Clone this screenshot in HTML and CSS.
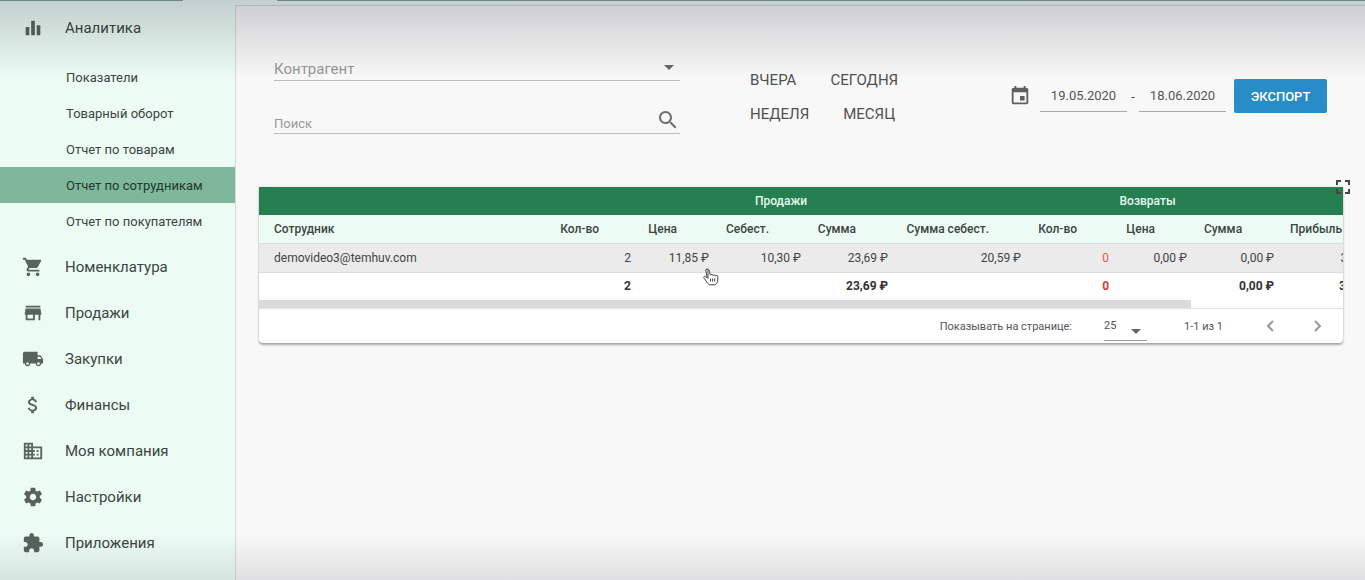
FILE: index.html
```
<!DOCTYPE html>
<html lang="ru">
<head>
<meta charset="utf-8">
<title>Отчет по сотрудникам</title>
<link rel="stylesheet" href="styles.css">
</head>
<body>
<div class="app">
  <div class="topbar"><span class="topbar-left"></span><span class="topbar-right"></span></div>
  <div class="layout">
    <nav class="sidebar">
      <a class="item" href="#"><svg class="icon" viewBox="0 0 24 24"><path d="M4 11h4v9H4zM10 4h4v16h-4zM16 9h4v11h-4z"/></svg>Аналитика</a>
      <div class="sub">
        <a class="subitem" href="#">Показатели</a>
        <a class="subitem" href="#">Товарный оборот</a>
        <a class="subitem" href="#">Отчет по товарам</a>
        <a class="subitem active" href="#">Отчет по сотрудникам</a>
        <a class="subitem" href="#">Отчет по покупателям</a>
      </div>
      <a class="item" href="#"><svg class="icon" viewBox="0 0 24 24"><path d="M7 18c-1.1 0-1.99.9-1.99 2S5.900 22 7 22s2-.9 2-2-.9-2-2-2zM1 2v2h2l3.600 7.590-1.350 2.450c-.16.28-.25.61-.25.96 0 1.100.9 2 2 2h12v-2H7.420c-.14 0-.25-.11-.25-.25l.03-.12.9-1.630h7.450c.75 0 1.410-.41 1.750-1.030l3.580-6.490c.08-.14.12-.31.12-.48 0-.55-.45-1-1-1H5.210l-.94-2H1zm16 16c-1.100 0-1.990.9-1.990 2s.89 2 1.990 2 2-.9 2-2-.9-2-2-2z"/></svg>Номенклатура</a>
      <a class="item" href="#"><svg class="icon" viewBox="0 0 24 24"><path d="M20 4H4v2h16V4zm1 10v-2l-1-5H4l-1 5v2h1v6h10v-6h4v6h2v-6h1zm-9 4H6v-4h6v4z"/></svg>Продажи</a>
      <a class="item" href="#"><svg class="icon" viewBox="0 0 24 24"><path d="M20 8h-3V4H3c-1.100 0-2 .9-2 2v11h2c0 1.660 1.340 3 3 3s3-1.340 3-3h6c0 1.660 1.340 3 3 3s3-1.340 3-3h2v-5l-3-4zM6 18.500c-.83 0-1.500-.67-1.500-1.500s.67-1.500 1.500-1.500 1.500.67 1.500 1.500-.67 1.500-1.500 1.500zm13.500-9l1.960 2.500H17V9.500h2.500zm-1.500 9c-.83 0-1.500-.67-1.500-1.500s.67-1.500 1.500-1.500 1.500.67 1.500 1.500-.67 1.500-1.500 1.500z"/></svg>Закупки</a>
      <a class="item" href="#"><svg class="icon" viewBox="0 0 24 24"><path d="M11.800 10.900c-2.270-.59-3-1.200-3-2.150 0-1.090 1.010-1.850 2.700-1.850 1.780 0 2.440.85 2.500 2.100h2.210c-.07-1.720-1.120-3.300-3.210-3.810V3h-3v2.160c-1.940.42-3.500 1.680-3.500 3.610 0 2.310 1.910 3.460 4.700 4.130 2.500.6 3 1.480 3 2.410 0 .69-.49 1.790-2.700 1.790-2.060 0-2.870-.92-2.980-2.100h-2.200c.12 2.190 1.760 3.420 3.680 3.830V21h3v-2.150c1.950-.37 3.500-1.500 3.500-3.550 0-2.840-2.430-3.810-4.700-4.400z"/></svg>Финансы</a>
      <a class="item" href="#"><svg class="icon" viewBox="0 0 24 24"><path d="M12 7V3H2v18h20V7H12zM6 19H4v-2h2v2zm0-4H4v-2h2v2zm0-4H4V9h2v2zm0-4H4V5h2v2zm4 12H8v-2h2v2zm0-4H8v-2h2v2zm0-4H8V9h2v2zm0-4H8V5h2v2zm10 12h-8v-2h2v-2h-2v-2h2v-2h-2V9h8v10zm-2-8h-2v2h2v-2zm0 4h-2v2h2v-2z"/></svg>Моя компания</a>
      <a class="item" href="#"><svg class="icon" viewBox="0 0 24 24"><path d="M19.430 12.980c.04-.32.07-.64.07-.98s-.03-.66-.07-.98l2.110-1.650c.19-.15.24-.42.12-.64l-2-3.460c-.12-.22-.39-.3-.61-.22l-2.490 1c-.52-.4-1.080-.73-1.690-.98l-.38-2.650C14.460 2.180 14.250 2 14 2h-4c-.25 0-.46.18-.49.42l-.38 2.650c-.61.25-1.170.59-1.690.98l-2.490-1c-.23-.09-.49 0-.61.22l-2 3.460c-.13.22-.07.49.12.64l2.110 1.650c-.04.32-.07.65-.07.98s.03.66.07.98l-2.110 1.650c-.19.15-.24.42-.12.64l2 3.460c.12.22.39.3.61.22l2.490-1c.52.4 1.080.73 1.690.98l.38 2.650c.03.24.24.42.49.42h4c.25 0 .46-.18.49-.42l.38-2.650c.61-.25 1.170-.59 1.690-.98l2.490 1c.23.09.49 0 .61-.22l2-3.460c.12-.22.07-.49-.12-.64l-2.110-1.650zM12 15.500c-1.930 0-3.500-1.570-3.500-3.500s1.570-3.500 3.500-3.500 3.500 1.570 3.500 3.500-1.570 3.500-3.500 3.500z"/></svg>Настройки</a>
      <a class="item" href="#"><svg class="icon" viewBox="0 0 24 24"><path d="M20.500 11H19V7c0-1.100-.9-2-2-2h-4V3.500C13 2.120 11.880 1 10.500 1S8 2.120 8 3.500V5H4c-1.100 0-1.990.9-1.990 2v3.800H3.500c1.490 0 2.700 1.210 2.700 2.700s-1.210 2.700-2.700 2.700H2V20c0 1.100.9 2 2 2h3.800v-1.500c0-1.490 1.210-2.700 2.700-2.700 1.490 0 2.700 1.210 2.700 2.700V22H17c1.100 0 2-.9 2-2v-4h1.500c1.380 0 2.500-1.120 2.500-2.500S21.880 11 20.500 11z"/></svg>Приложения</a>
    </nav>
    <main class="main">
      <form class="filters">
        <div class="fields">
          <div class="field">
            <select class="control" aria-label="Контрагент"><option>Контрагент</option></select>
            <svg class="caret" viewBox="0 0 10 5"><path d="M0 0h10L5 5z"/></svg>
          </div>
          <div class="field">
            <input class="control search" type="text" placeholder="Поиск" aria-label="Поиск">
            <svg class="lens" viewBox="0 0 24 24"><path d="M15.500 14h-.79l-.28-.27C15.410 12.590 16 11.110 16 9.500 16 5.910 13.090 3 9.500 3S3 5.910 3 9.500 5.910 16 9.500 16c1.610 0 3.090-.59 4.230-1.570l.27.28v.79l5 4.990L20.490 19l-4.990-5zm-6 0C7.010 14 5 11.990 5 9.500S7.010 5 9.500 5 14 7.010 14 9.500 11.990 14 9.500 14z"/></svg>
          </div>
        </div>
        <div class="ranges">
          <div class="range-row"><button type="button" class="range">Вчера</button><button type="button" class="range">Сегодня</button></div>
          <div class="range-row"><button type="button" class="range">Неделя</button><button type="button" class="range">Месяц</button></div>
        </div>
        <div class="dates">
          <svg class="calendar" viewBox="0 0 24 24"><path d="M17 12h-5v5h5v-5zM16 1v2H8V1H6v2H5c-1.110 0-1.990.9-1.990 2L3 19c0 1.100.89 2 2 2h14c1.100 0 2-.9 2-2V5c0-1.100-.9-2-2-2h-1V1h-2zm3 18H5V8h14v11z"/></svg>
          <input class="date" type="text" value="19.05.2020" aria-label="Дата начала">
          <span class="dash">-</span>
          <input class="date" type="text" value="18.06.2020" aria-label="Дата окончания">
          <button type="button" class="export">Экспорт</button>
        </div>
      </form>
      <section class="report">
        <button type="button" class="expand" aria-label="На весь экран"><svg viewBox="0 0 14 14"><path d="M1 5V1h4M9 1h4v4M13 9v4H9M5 13H1V9"/></svg></button>
        <div class="card">
          <div class="scroller">
            <table class="table">
              <colgroup><col class="c-name"><col class="c-90"><col class="c-78"><col class="c-92"><col class="c-87"><col class="c-133"><col class="c-88"><col class="c-78"><col class="c-87"><col class="c-100"><col></colgroup>
              <thead>
                <tr class="groups"><th></th><th colspan="5">Продажи</th><th colspan="3">Возвраты</th><th colspan="2"></th></tr>
                <tr class="heads"><th>Сотрудник</th><th>Кол-во</th><th>Цена</th><th>Себест.</th><th>Сумма</th><th>Сумма себест.</th><th>Кол-во</th><th>Цена</th><th>Сумма</th><th>Прибыль</th><th></th></tr>
              </thead>
              <tbody>
                <tr class="row"><td>demovideo3@temhuv.com</td><td>2</td><td>11,85 ₽</td><td>10,30 ₽</td><td>23,69 ₽</td><td>20,59 ₽</td><td class="red">0</td><td>0,00 ₽</td><td>0,00 ₽</td><td>3,10 ₽</td><td></td></tr>
              </tbody>
              <tfoot>
                <tr class="total"><td></td><td>2</td><td></td><td></td><td>23,69 ₽</td><td></td><td class="red">0</td><td></td><td>0,00 ₽</td><td>3,10 ₽</td><td></td></tr>
              </tfoot>
            </table>
          </div>
          <div class="track"><div class="thumb"></div></div>
          <div class="pager">
            <label for="per-page">Показывать на странице:</label>
            <div class="page-size">
              <select id="per-page"><option>25</option></select>
              <svg class="caret" viewBox="0 0 10 5"><path d="M0 0h10L5 5z"/></svg>
            </div>
            <span class="count">1-1 из 1</span>
            <button type="button" class="step" aria-label="Назад"><svg viewBox="0 0 8 12"><path d="M7 1L2 6l5 5"/></svg></button>
            <button type="button" class="step" aria-label="Вперед"><svg viewBox="0 0 8 12"><path d="M1 1l5 5-5 5"/></svg></button>
          </div>
        </div>
        <svg class="pointer" viewBox="0 0 16 18"><path d="M5 10.500V2.300C5 .6 2.800.6 2.800 2.300L4.200 10 2.400 8.600C1.200 7.800.2 9 1 10.100L4.600 15.200C5.200 16 6 16.800 7.300 16.800H11.500C13.500 16.300 14.800 14.500 14.800 12V8.500C14.800 7.200 13 7 12.700 8.200 12.700 6.600 10.500 6.400 10.200 7.600 10 6.200 7.800 6 7.500 7.300L6 2.300C5.600.9 3.200.8 2.900 2.300"/><path d="M7.500 10.500v3M9.600 10.500v3M11.700 10.500v3"/></svg>
      </section>
    </main>
  </div>
</div>
</body>
</html>
```
FILE: styles.css
```
* { box-sizing: border-box; }
body { margin: 0; background: #f8f8f8; color: #444; font-family: Roboto, "Noto Sans", sans-serif; font-size: 13px; }
button, input, select { font: inherit; color: inherit; border: 0; background: none; padding: 0; margin: 0; border-radius: 0; appearance: none; outline: 0; }
a { color: inherit; text-decoration: none; }
svg { display: block; fill: currentColor; flex: none; }

.app { position: relative; display: flex; flex-direction: column; min-height: 100vh; background: #ecfcf5; }
.app::before, .app::after { content: ""; position: absolute; left: 0; right: 0; z-index: 5; pointer-events: none; }
.app::before { top: 0; height: 78px; background: linear-gradient(rgba(30, 30, 45, .2), rgba(30, 30, 45, .12) 40%, rgba(30, 30, 45, 0)); }
.app::after { bottom: 0; height: 46px; background: linear-gradient(rgba(30, 30, 45, 0), rgba(30, 30, 45, .11)); }
.topbar { display: flex; justify-content: space-between; gap: 94px; height: 5px; }
.topbar-left, .topbar-right { height: 1px; background: #7fa796; }
.topbar-left { width: 183px; }
.topbar-right { flex: 1; }
.layout { display: flex; flex: 1; }

.sidebar { width: 235px; flex: none; }
.item { display: flex; align-items: center; gap: 22px; height: 46px; padding-left: 22px; font-size: 15px; color: #3c4541; }
.icon { width: 22px; height: 22px; color: #59625d; }
.item { gap: 21px; }
.sub { padding: 8px 0 5px; }
.subitem { display: flex; align-items: center; height: 36px; padding-left: 66px; color: #3c4541; }
.active { background: #7eb799; color: #22382d; }

.main { flex: 1; min-width: 0; background: #f8f8f8; border: solid #d3d9d7; border-width: 1px 0 0 1px; padding: 48px 22px 0 23px; }
.filters { display: flex; align-items: flex-start; padding: 0 16px 0 15px; }
.fields { flex: 1; display: grid; gap: 26px; }
.field { position: relative; }
.control { display: block; width: 100%; height: 27px; padding: 4px 30px 0 0; border-bottom: 1px solid #bbb; font-size: 15px; color: #969696; }
.search { font-size: 13px; padding-top: 6px; }
.search::placeholder { color: #999; opacity: 1; }
.caret { width: 10px; height: 5px; color: #666; pointer-events: none; }
.field .caret { position: absolute; right: 6px; top: 11px; }
.lens { position: absolute; right: 0; top: 1px; width: 24px; height: 24px; color: #707070; }
.ranges { margin: 14px 110px 0 70px; width: 151px; }
.range-row { display: flex; gap: 34px; height: 34px; }
.range { height: 24px; font-size: 15px; text-transform: uppercase; color: #505050; }
.dates { display: flex; align-items: center; margin-top: 25px; }
.calendar { width: 22px; height: 22px; margin: 0 9px 0 -2px; color: #606060; }
.date { width: 87px; height: 31px; border-bottom: 1px solid #aaa; text-align: center; font-size: 13px; color: #555; }
.dash { width: 12px; text-align: center; }
.export { width: 93px; height: 34px; margin-left: 8px; border-radius: 2px; background: #288cc7; color: #fff; font-weight: 500; text-transform: uppercase; }

.report { position: relative; margin-top: 51px; }
.card { background: #fff; border-radius: 0 0 4px 4px; box-shadow: 0 2px 2px rgba(0, 0, 0, .3), 0 0 2px rgba(0, 0, 0, .15); overflow: hidden; }
.scroller { overflow: hidden; }
.table { width: 1262px; table-layout: fixed; border-collapse: collapse; font-size: 12px; }
.c-name { width: 290px; } .c-90 { width: 90px; } .c-78 { width: 78px; } .c-92 { width: 92px; } .c-87 { width: 87px; }
.c-133 { width: 133px; } .c-88 { width: 88px; } .c-100 { width: 100px; }
.table th, .table td { height: 28px; padding: 0 8px 0 0; text-align: right; white-space: nowrap; }
.table th:first-child, .table td:first-child { text-align: left; padding-left: 15px; }
.table .groups th { background: #267f51; color: #e8f7ef; text-align: center; padding-right: 16px; font-weight: 500; }
.table .heads th { background: #ecfcf5; color: #3c4541; font-weight: 500; padding-right: 40px; }
.table .row td { height: 29px; background: #ebebeb; border: solid #dcdcdc; border-width: 1px 0; }
.table .total td { font-weight: 700; color: #333; }
.table .row .red { color: #f2564b; }
.table .total .red { color: #e0392f; }
.track { height: 9px; border-bottom: 1px solid #e0e0e0; }
.thumb { width: 86%; height: 8px; background: #dadada; }
.pager { display: flex; align-items: center; justify-content: flex-end; height: 34px; padding-right: 15px; font-size: 11px; color: #555; }
.page-size { position: relative; width: 43px; margin: 0 37px 0 32px; }
.page-size select { display: block; width: 100%; height: 30px; border-bottom: 1px solid #999; }
.page-size .caret { position: absolute; right: 6px; top: 18px; }
.count { margin-right: 37px; }
.step { width: 20px; height: 24px; display: grid; place-items: center; }
.step + .step { margin-left: 28px; }
.step svg { width: 8px; height: 12px; fill: none; stroke: #999; stroke-width: 2; }
.expand { position: absolute; right: -7px; top: -7px; z-index: 1; }
.expand svg { width: 14px; height: 14px; fill: none; stroke: #444; stroke-width: 2; }
.pointer { position: absolute; left: 41%; top: 81px; width: 16px; height: 18px; fill: #fff; stroke: #444; stroke-width: 1; }
```
